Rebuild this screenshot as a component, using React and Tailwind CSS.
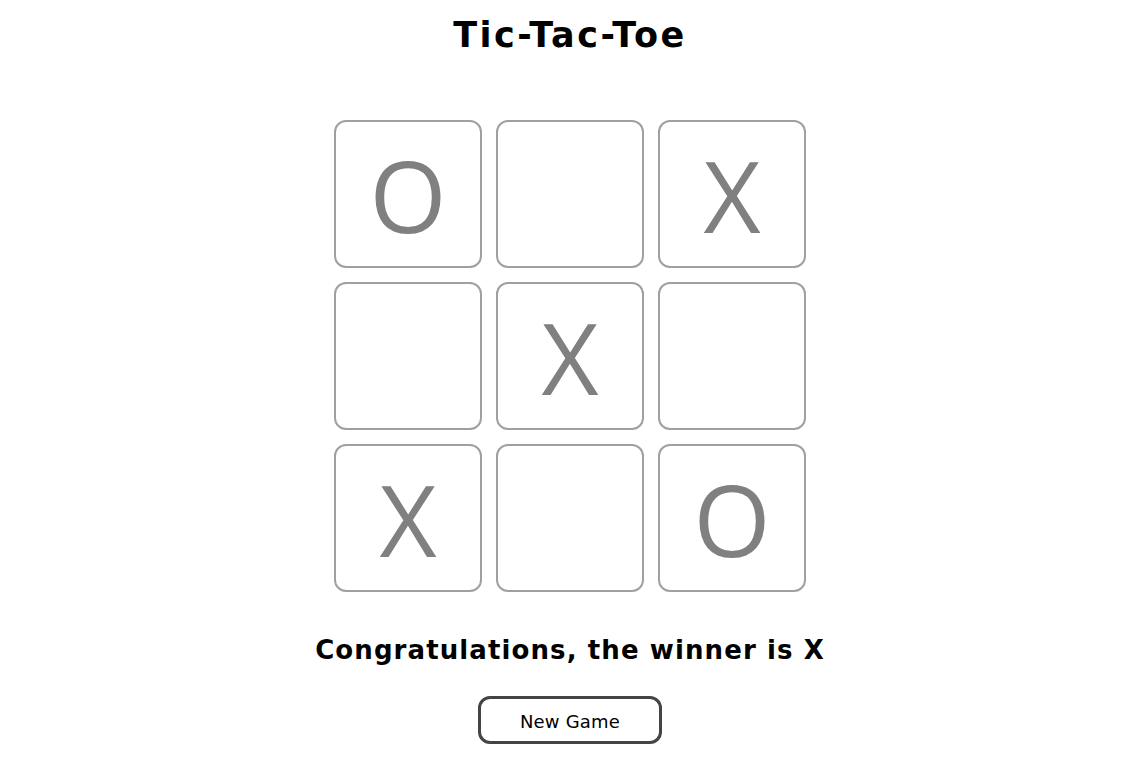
import React, { useState } from "react";

const WINNER_BOARD = ["O", "", "X", "", "X", "", "X", "", "O"];

const Cell = ({ value, onClick }) => (
  <button
    onClick={onClick}
    className="w-[148px] h-[148px] rounded-[12px] border-2 border-[#a0a0a0] bg-white flex items-center justify-center text-[#808080] text-[99px] leading-none font-['Open_Sans',sans-serif]"
  >
    {value}
  </button>
);

const App = () => {
  const [board, setBoard] = useState(WINNER_BOARD);

  return (
    <div className="min-h-screen bg-white flex flex-col items-center pl-[12px] font-['DejaVu_Sans',sans-serif] text-black">
      <h1 className="mt-[13px] text-[35px] font-bold leading-[44px] tracking-[2.5px]">Tic-Tac-Toe</h1>

      <div className="mt-[63px] grid grid-cols-3 gap-[14px]">
        {board.map((v, i) => (
          <Cell key={i} value={v} onClick={() => {}} />
        ))}
      </div>

      <h2 className="mt-[34px] text-[26px] font-bold leading-[48px] tracking-[1.1px]">Congratulations, the winner is X</h2>

      <button
        onClick={() => setBoard(Array(9).fill(""))}
        className="mt-[22px] w-[184px] h-[48px] pt-[3px] rounded-[12px] border-[3px] border-[#444444] bg-white text-[18px] tracking-[0.2px]"
      >
        New Game
      </button>
    </div>
  );
};

export default App;
